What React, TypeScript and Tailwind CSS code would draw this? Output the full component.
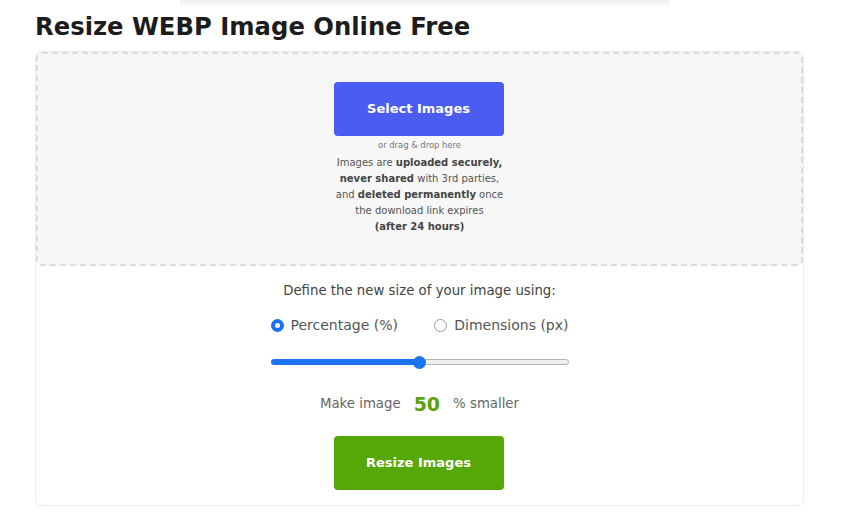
import React from "react";

export default function App() {
  const font = { fontFamily: '"DejaVu Sans", Verdana, sans-serif' };
  return (
    <div className="w-[850px] h-[519px] bg-white overflow-hidden" style={font}>
      <div className="h-[8px] mx-[180px] bg-gradient-to-b from-[#f0f0f0] to-white" />
      <div className="px-[35px] pt-[4px]">
        <h1 className="text-[24.3px] leading-[30px] font-bold text-[#1c1c1c]">
          Resize WEBP Image Online Free
        </h1>
        <div className="mt-[9px] w-[769px] h-[455px] border border-[#ececec] rounded-[6px] flex flex-col items-center">
          <div className="w-[767px] h-[214px] border-[2px] border-dashed border-[#dcdcdc] rounded-[6px] bg-[#f7f7f7] flex flex-col items-center pt-[28px]">
            <button className="w-[170px] h-[54px] -ml-[2px] rounded-[4px] bg-[#4a5cf2] text-white text-[13px] font-bold">
              Select Images
            </button>
            <div className="mt-[3px] text-[8.4px] leading-[12px] text-[#777]">or drag &amp; drop here</div>
            <div className="mt-[4px] text-[10px] leading-[16px] text-[#555] text-center">
              Images are <b className="text-[#444]">uploaded securely,</b>
              <br />
              <b className="text-[#444]">never shared</b> with 3rd parties,
              <br />
              and <b className="text-[#444]">deleted permanently</b> once
              <br />
              the download link expires
              <br />
              <b className="text-[#444]">(after 24 hours)</b>
            </div>
          </div>
          <div className="mt-[16px] text-[13.3px] leading-[18px] text-[#444]">
            Define the new size of your image using:
          </div>
          <div className="mt-[16px] w-[298px] flex items-center justify-between text-[14px] leading-[18px] text-[#555]">
            <label className="flex items-center gap-[7px]">
              <span className="w-[13px] h-[13px] rounded-full border-[4px] border-[#1a73f0] bg-white" />
              Percentage (%)
            </label>
            <label className="flex items-center gap-[7px]">
              <span className="w-[13px] h-[13px] rounded-full border border-[#9a9a9a] bg-white" />
              Dimensions (px)
            </label>
          </div>
          <div className="mt-[21px] w-[298px] h-[14px] flex items-center">
            <div className="w-[143px] h-[6px] rounded-l-full bg-[#1a73f0]" />
            <div className="w-[13px] h-[13px] rounded-full bg-[#1a73f0] -mx-[1px] relative" />
            <div className="flex-1 h-[6px] rounded-r-full bg-[#efefef] border border-[#b5b5b5]" />
          </div>
          <div className="mt-[24px] flex items-center text-[13.3px] leading-[22px] text-[#666]">
            <span>Make image</span>
            <span className="mx-[13px] text-[19px] font-bold text-[#5aa30f]">50</span>
            <span>% smaller</span>
          </div>
          <button className="mt-[21px] -ml-[2px] w-[170px] h-[54px] rounded-[4px] bg-[#55a805] text-white text-[13px] font-bold">
            Resize Images
          </button>
        </div>
      </div>
    </div>
  );
}
